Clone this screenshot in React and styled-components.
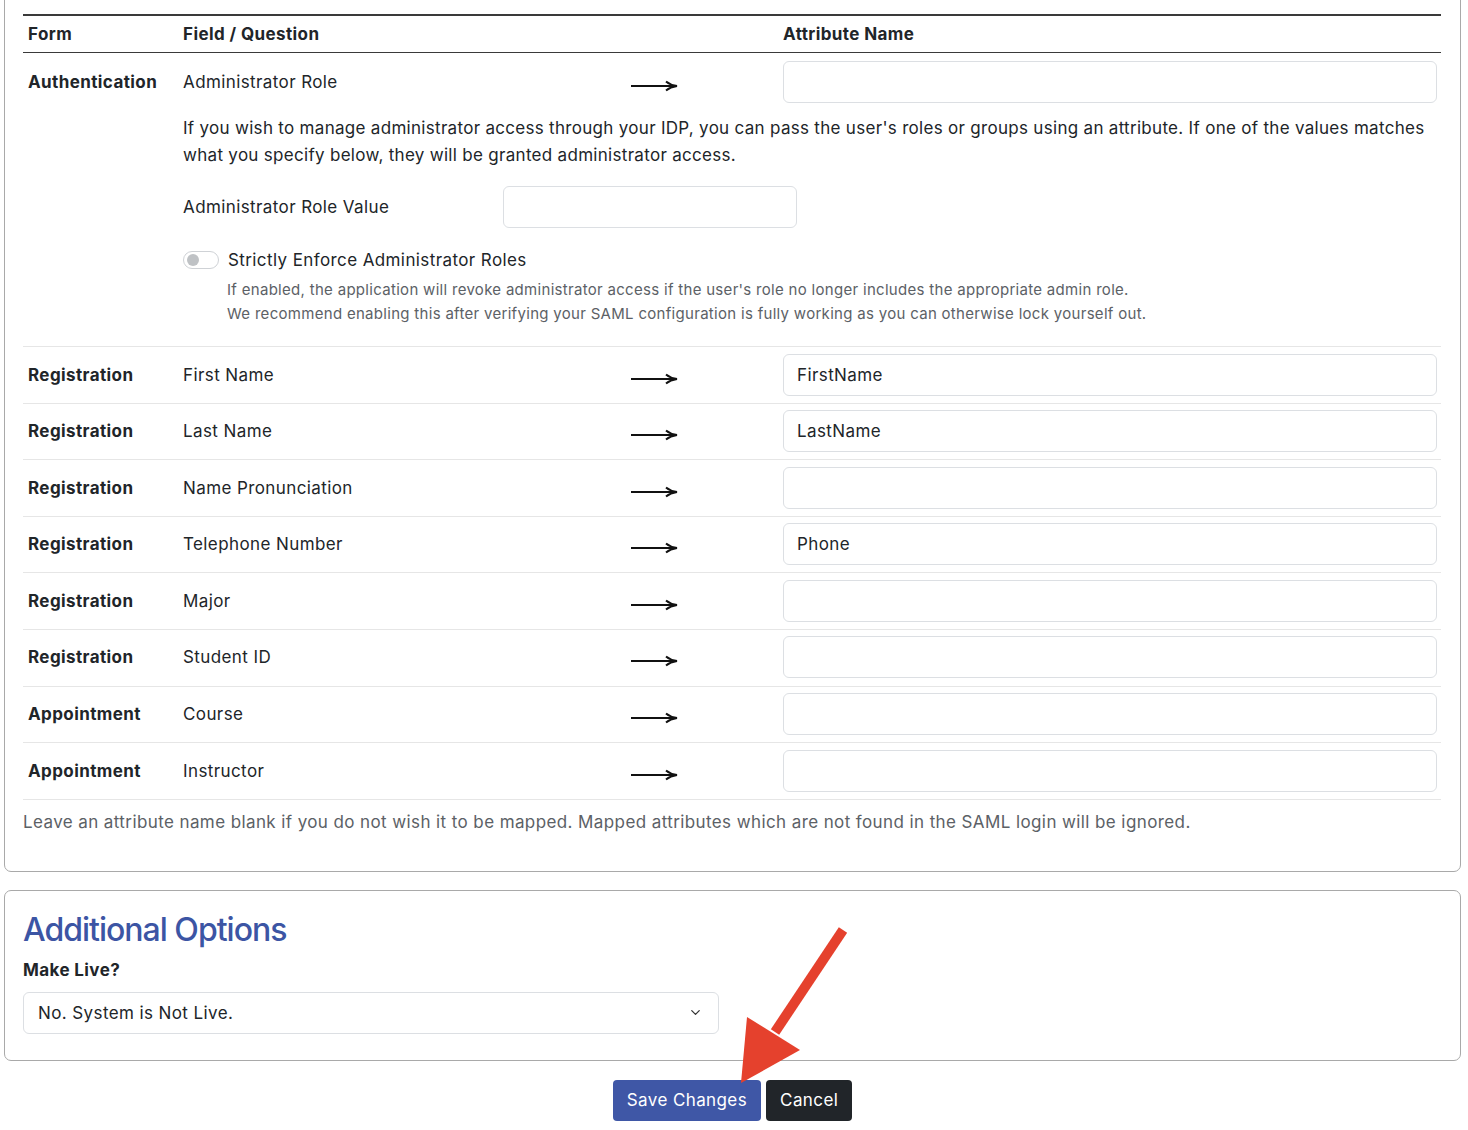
import React from 'react';
import styled, { createGlobalStyle } from 'styled-components';
import { ChevronDown } from 'lucide-react';

const GlobalStyle = createGlobalStyle`
  body {
    margin: 0;
    background: #fff;
    font-family: Inter, "Noto Sans", sans-serif;
    color: #212529;
    font-size: 17px;
    letter-spacing: 0.4px;
  }
`;

const Page = styled.div`
  position: relative;
  padding: 0 7px 0 4px;
  overflow: hidden;
  height: 1130px;
`;

const Card = styled.section`
  border: 1px solid #a9a9a9;
  border-radius: 7px;
  background: #fff;
  padding: ${p => p.$pad};
  margin-top: ${p => p.$top || '0'};
`;

const Table = styled.div`
  display: grid;
  grid-template-columns: 155px 447px 153px 1fr;
  margin-right: 1px;
`;

const HeadRow = styled.div`
  display: contents;
`;

const HeadCell = styled.div`
  font-weight: 700;
  padding: 0 5px;
  height: 36px;
  display: flex;
  align-items: center;
  border-top: 2px solid #3a3a3a;
  border-bottom: 1.5px solid #3a3a3a;
`;

const Row = styled.div`
  grid-column: 1 / -1;
  display: grid;
  grid-template-columns: subgrid;
  align-items: center;
  padding: ${p => p.$pad || '6.5px 0 7.1px'};
  border-bottom: 1px solid #e6e6e6;
`;

const FormCell = styled.div`
  font-weight: 700;
  padding: 0 5px;
`;

const Cell = styled.div`
  padding: 0 5px;
`;

const ArrowCell = styled.div`
  padding: 8px 5px 0;
  display: flex;
`;

const TextInput = styled.input`
  box-sizing: border-box;
  width: ${p => p.$width || '100%'};
  height: 42px;
  border: 1px solid #dcdfe3;
  border-radius: 6px;
  padding: 0 13px;
  font: inherit;
  letter-spacing: inherit;
  color: #212529;
  outline: none;
`;

const InputCell = styled.div`
  padding: 0 4px 0 5px;
`;

const Details = styled.div`
  grid-column: 2 / -1;
  padding: 0 5px;
`;

const Paragraph = styled.p`
  margin: 12px 0 0;
  line-height: 27px;
  letter-spacing: 0.3px;
`;

const InlineField = styled.div`
  display: flex;
  align-items: center;
  margin-top: 17px;
`;

const InlineLabel = styled.label`
  width: 320px;
`;

const SwitchRow = styled.div`
  display: flex;
  align-items: center;
  gap: 9px;
  margin-top: 19px;
  line-height: 26px;
`;

const Switch = styled.span`
  box-sizing: border-box;
  width: 36px;
  height: 18px;
  border: 1px solid #cfd2d6;
  border-radius: 9px;
  display: flex;
  align-items: center;
  padding-left: 3px;
  &::after {
    content: '';
    width: 12px;
    height: 12px;
    border-radius: 50%;
    background: #bfc2c5;
  }
`;

const Hint = styled.div`
  margin: 5px 0 0 44px;
  font-size: 15px;
  letter-spacing: 0.3px;
  line-height: 24px;
  color: #5c6166;
  padding-bottom: 20px;
`;

const Note = styled.p`
  margin: 10px 0 0;
  color: #5c6166;
  line-height: 24px;
`;

const Title = styled.h2`
  margin: 0;
  font-size: 32px;
  font-weight: 500;
  letter-spacing: -1px;
  line-height: 38px;
  color: #3c55a4;
`;

const FieldLabel = styled.div`
  font-weight: 700;
  margin-top: 9px;
  line-height: 24px;
`;

const Select = styled.div`
  box-sizing: border-box;
  width: 696px;
  height: 42px;
  margin-top: 10px;
  border: 1px solid #dcdfe3;
  border-radius: 6px;
  display: flex;
  align-items: center;
  justify-content: space-between;
  padding: 0 15px 0 14px;
`;

const Actions = styled.div`
  display: flex;
  justify-content: center;
  gap: 5px;
  margin-top: 19px;
`;

const Button = styled.button`
  height: 41px;
  padding: 0 14px;
  border: none;
  border-radius: 4px;
  font: inherit;
  letter-spacing: inherit;
  color: #fff;
  background: ${p => (p.$dark ? '#212529' : '#3f57a6')};
`;

const Pointer = styled.svg`
  position: absolute;
  left: 735px;
  top: 920px;
`;

const Arrow = () => (
  <svg width="48" height="12" viewBox="0 0 48 12">
    <path d="M1 6H46" stroke="#111" strokeWidth="2" />
    <path d="M36 1.5C39 4 42 5.3 47 6C42 6.7 39 8 36 10.5" stroke="#111" strokeWidth="2" fill="none" />
  </svg>
);

const rows = [
  ['Registration', 'First Name', 'FirstName'],
  ['Registration', 'Last Name', 'LastName'],
  ['Registration', 'Name Pronunciation', ''],
  ['Registration', 'Telephone Number', 'Phone'],
  ['Registration', 'Major', ''],
  ['Registration', 'Student ID', ''],
  ['Appointment', 'Course', ''],
  ['Appointment', 'Instructor', ''],
];

export default function App() {
  return (
    <Page>
      <GlobalStyle />
      <Card $top="-20px" $pad="33px 18px 37px">
        <Table>
          <HeadRow>
            <HeadCell>Form</HeadCell>
            <HeadCell>Field / Question</HeadCell>
            <HeadCell />
            <HeadCell>Attribute Name</HeadCell>
          </HeadRow>
          <Row $pad="8px 0 0">
            <FormCell>Authentication</FormCell>
            <Cell>Administrator Role</Cell>
            <ArrowCell><Arrow /></ArrowCell>
            <InputCell><TextInput defaultValue="" /></InputCell>
            <Details>
              <Paragraph>
                If you wish to manage administrator access through your IDP, you can pass the user's roles or groups using an attribute. If one of the values matches what you specify below, they will be granted administrator access.
              </Paragraph>
              <InlineField>
                <InlineLabel>Administrator Role Value</InlineLabel>
                <TextInput $width="294px" defaultValue="" />
              </InlineField>
              <SwitchRow>
                <Switch />
                <span>Strictly Enforce Administrator Roles</span>
              </SwitchRow>
              <Hint>
                If enabled, the application will revoke administrator access if the user's role no longer includes the appropriate admin role.
                <br />
                We recommend enabling this after verifying your SAML configuration is fully working as you can otherwise lock yourself out.
              </Hint>
            </Details>
          </Row>
          {rows.map(([form, field, value], i) => (
            <Row key={i}>
              <FormCell>{form}</FormCell>
              <Cell>{field}</Cell>
              <ArrowCell><Arrow /></ArrowCell>
              <InputCell><TextInput defaultValue={value} /></InputCell>
            </Row>
          ))}
        </Table>
        <Note>
          Leave an attribute name blank if you do not wish it to be mapped. Mapped attributes which are not found in the SAML login will be ignored.
        </Note>
      </Card>

      <Card $top="18px" $pad="20px 18px 26px">
        <Title>Additional Options</Title>
        <FieldLabel>Make Live?</FieldLabel>
        <Select>
          <span>No. System is Not Live.</span>
          <ChevronDown size={15} strokeWidth={2} color="#333" />
        </Select>
      </Card>

      <Actions>
        <Button>Save Changes</Button>
        <Button $dark>Cancel</Button>
      </Actions>

      <Pointer width="115" height="170" viewBox="0 0 115 170">
        <path d="M108 10L40 112" stroke="#e5412d" strokeWidth="10" />
        <path d="M12 97L65 130L6 163Z" fill="#e5412d" />
      </Pointer>
    </Page>
  );
}
